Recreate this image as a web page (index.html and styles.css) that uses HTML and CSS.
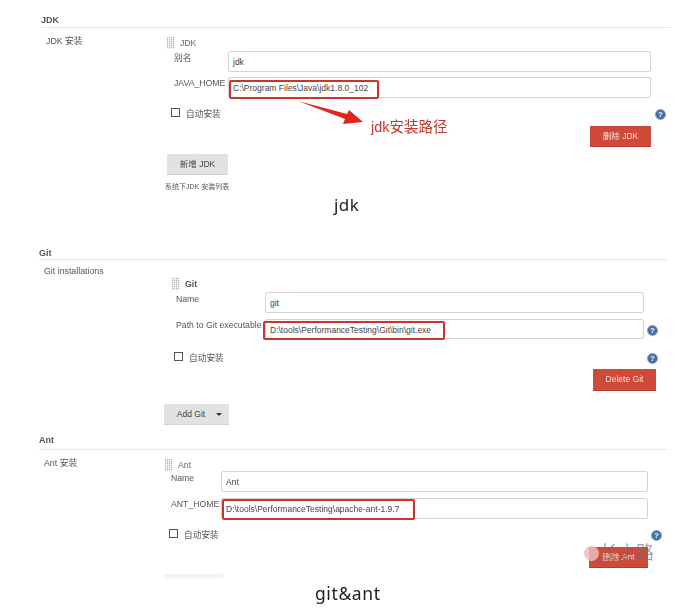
FILE: index.html
```html
<!DOCTYPE html>
<html lang="zh">
<head>
<meta charset="utf-8">
<title>Global Tool Configuration</title>
<link rel="stylesheet" href="styles.css">
</head>
<body>
<main class="page">
  <section class="sec sec-jdk">
    <h2 class="sec-title">JDK</h2>
    <div class="sec-label">JDK 安装</div>
    <div class="inst">
      <div class="inst-head"><span class="handle"></span><span class="inst-name">JDK</span></div>
      <div class="row row-first"><span class="row-label">别名</span><div class="field">jdk</div></div>
      <div class="row row-second">
        <span class="row-label">JAVA_HOME</span>
        <div class="field field-marked">C:\Program Files\Java\jdk1.8.0_102<span class="mark"></span>
          <svg class="arrow" width="80" height="34" viewBox="0 0 80 34"><polygon points="1,1 50,14 52,10 66,22 46,24 48,19" fill="#e0261c"/></svg>
          <span class="note">jdk安装路径</span>
        </div>
      </div>
      <div class="check"><span class="box"></span><span>自动安装</span></div>
      <div class="help-line"><span class="help">?</span></div>
      <div class="del-line"><span class="btn-del">删除 JDK</span></div>
      <div class="add-line"><span class="btn-add">新增 JDK</span></div>
      <div class="small">系统下JDK 安装列表</div>
    </div>
    <p class="caption">jdk</p>
  </section>

  <section class="sec sec-git">
    <h2 class="sec-title">Git</h2>
    <div class="sec-label">Git installations</div>
    <div class="inst">
      <div class="inst-head"><span class="handle"></span><span class="inst-name inst-bold">Git</span></div>
      <div class="row row-first"><span class="row-label">Name</span><div class="field">git</div></div>
      <div class="row row-second">
        <span class="row-label">Path to Git executable</span>
        <div class="field field-marked">D:\tools\PerformanceTesting\Git\bin\git.exe<span class="mark"></span><span class="help help-side">?</span></div>
      </div>
      <div class="check"><span class="box"></span><span>自动安装</span></div>
      <div class="help-line"><span class="help">?</span></div>
      <div class="del-line"><span class="btn-del">Delete Git</span></div>
      <div class="add-line"><span class="btn-add">Add Git<span class="caret"></span></span></div>
    </div>
  </section>

  <section class="sec sec-ant">
    <h2 class="sec-title">Ant</h2>
    <div class="sec-label">Ant 安装</div>
    <div class="inst">
      <div class="inst-head"><span class="handle"></span><span class="inst-name">Ant</span></div>
      <div class="row row-first"><span class="row-label">Name</span><div class="field">Ant</div></div>
      <div class="row row-second">
        <span class="row-label">ANT_HOME</span>
        <div class="field field-marked">D:\tools\PerformanceTesting\apache-ant-1.9.7<span class="mark"></span></div>
      </div>
      <div class="check"><span class="box"></span><span>自动安装</span></div>
      <div class="help-line"><span class="help">?</span></div>
      <div class="del-line">
        <span class="btn-del">删除 Ant
          <span class="watermark"><span class="wm-dot"></span><span class="wm-text">长之路</span></span>
        </span>
      </div>
      <div class="add-line"><span class="btn-add btn-cut"></span></div>
    </div>
    <p class="caption">git&amp;ant</p>
  </section>
</main>
</body>
</html>
```

FILE: styles.css
```css
* { box-sizing: border-box; }

html, body { margin: 0; background: #fff; }

.page {
  width: 688px;
  height: 610px;
  overflow: hidden;
  font-family: "Liberation Sans", "Noto Sans CJK SC", sans-serif;
  font-size: 8.7px;
  color: #555;
  filter: blur(0.4px);
}

.sec {
  margin-left: var(--sec-x);
  position: relative;
}

.sec-jdk {
  --sec-x: 41px; --sec-w: 630px;
  --inst-x: 126px; --handle-x: 0px; --label-x: 7px; --check-x: 4px;
  --input-x: 61px; --input-w: 423px; --del-right: 0px; --help-right: -15px;
  --mark-w: 150px;
  height: 215px;
  padding-top: 14px;
}

.sec-git {
  --sec-x: 39px; --sec-w: 629px;
  --inst-x: 125px; --handle-x: 8px; --label-x: 12px; --check-x: 10px;
  --input-x: 101px; --input-w: 379px; --del-right: -12px; --help-right: -14px;
  --mark-w: 182px;
  margin-top: 32px;
  height: 187px;
}

.sec-ant {
  --sec-x: 39px; --sec-w: 629px;
  --inst-x: 124px; --handle-x: 2px; --label-x: 8px; --check-x: 6px;
  --input-x: 58px; --input-w: 427px; --del-right: 0px; --help-right: -14px;
  --mark-w: 193px;
  height: 176px;
}

.sec-title {
  width: var(--sec-w);
  height: 14px;
  margin: 0;
  border-bottom: 1px solid #eaeaea;
  font-size: 9px;
  line-height: 12px;
  font-weight: 700;
  color: #555;
}

.sec-git .sec-title { height: 13px; }
.sec-ant .sec-title { height: 16px; }

.sec-label {
  height: 0;
  margin: 7px 0 0 5px;
  line-height: 12px;
  font-size: 8.8px;
}

.sec-git .sec-label { margin-top: 5px; }

.inst { margin-left: var(--inst-x); }

.inst-head {
  display: flex;
  align-items: center;
  gap: 5px;
  height: 12px;
  margin: 2px 0 0 var(--handle-x);
}

.sec-git .inst-head { margin-top: 13px; }

.handle {
  width: 8px;
  height: 12px;
  background-color: #eee;
  background-image:
    repeating-linear-gradient(0deg, rgba(255,255,255,.6) 0 1px, transparent 1px 2px),
    repeating-linear-gradient(90deg, #b5b5b5 0 1px, transparent 1px 2px);
}

.inst-name { color: #666; }
.inst-bold { font-weight: 700; color: #555; }

.row {
  display: flex;
  padding-left: var(--label-x);
}

.row-first { margin-top: 2px; height: 21px; }
.row-second { margin-top: 5px; height: 21px; }
.sec-git .row-second { margin-top: 6px; height: 20px; }
.sec-ant .row-first { margin-top: 0; }
.sec-ant .row-second { margin-top: 6px; }

.row-label {
  flex: none;
  width: calc(var(--input-x) - var(--label-x));
  padding-top: 1px;
  line-height: 12px;
  white-space: nowrap;
}

.row-second .row-label { padding-top: 0; }

.field {
  position: relative;
  flex: none;
  width: var(--input-w);
  height: 100%;
  padding: 1px 0 0 4px;
  border: 1px solid #d4d4d4;
  border-radius: 2px;
  background: #fff;
  font-size: 8.5px;
  line-height: 19px;
  color: #444;
  white-space: nowrap;
}

.mark {
  position: absolute;
  left: 0;
  top: 2px;
  width: var(--mark-w);
  height: 19px;
  border: 2px solid #c8352c;
  border-radius: 2px;
}

.sec-git .mark { left: -3px; top: 1px; }
.sec-ant .mark { left: 0; top: 0; height: 21px; }

.arrow {
  position: absolute;
  left: 68px;
  top: 22px;
}

.note {
  position: absolute;
  left: 142px;
  top: 39px;
  font-size: 14.5px;
  line-height: 20px;
  color: #c0392b;
}

.check {
  display: flex;
  align-items: center;
  gap: 6px;
  height: 10px;
  margin: 10px 0 0 var(--check-x);
}

.sec-git .check { margin-top: 13px; }

.box {
  width: 9px;
  height: 9px;
  margin-bottom: 2px;
  border: 1px solid #555;
  background: #fff;
}

.help-line {
  display: flex;
  justify-content: flex-end;
  height: 0;
  width: calc(var(--input-x) + var(--input-w));
  position: relative;
}

.help {
  position: absolute;
  right: var(--help-right);
  top: -9px;
  width: 11px;
  height: 11px;
  border-radius: 50%;
  border: 1px solid #8aa6c4;
  background: #3f6fa3;
  color: #fff;
  font-size: 8px;
  font-weight: 700;
  line-height: 9px;
  text-align: center;
}

.help-side {
  right: -15px;
  top: 5px;
  padding: 0;
}

.del-line {
  display: flex;
  justify-content: flex-end;
  width: calc(var(--input-x) + var(--input-w) - var(--del-right));
  margin-top: 8px;
}

.sec-git .del-line { margin-top: 7px; }

.btn-del {
  position: relative;
  display: block;
  width: 61px;
  height: 21px;
  background: #d04a3a;
  border-bottom: 1px solid #b53a2d;
  color: #f6dedb;
  font-size: 8.5px;
  line-height: 20px;
  text-align: center;
}

.sec-git .btn-del { width: 63px; height: 22px; }
.sec-ant .btn-del { width: 59px; }

.add-line { margin-top: 7px; }
.sec-git .add-line { margin-top: 13px; }
.sec-ant .add-line { margin-top: 6px; }

.btn-add {
  display: block;
  width: 61px;
  height: 21px;
  background: #e2e2e2;
  border-bottom: 1px solid #d2d2d2;
  color: #444;
  font-size: 8.5px;
  line-height: 20px;
  text-align: center;
}

.sec-git .btn-add {
  position: relative;
  width: 65px;
  padding-right: 11px;
}

.sec-ant .btn-add {
  width: 60px;
  height: 5px;
  border: 0;
  background: linear-gradient(#f1f1f1, #fafafa);
}

.caret {
  position: absolute;
  right: 7px;
  top: 9px;
  border: 3px solid transparent;
  border-top: 3px solid #333;
  border-bottom: 0;
}

.small {
  margin: 7px 0 0 -2px;
  font-size: 7px;
  line-height: 10px;
  white-space: nowrap;
  color: #555;
}

.caption {
  position: absolute;
  margin: 0;
  font-size: 17px;
  line-height: 22px;
  font-family: "Noto Sans", sans-serif;
  letter-spacing: .4px;
  color: #222;
}

.sec-jdk .caption { left: 293px; top: 194px; }
.sec-ant .caption { left: 276px; top: 148px; font-size: 17.5px; letter-spacing: .6px; }

.watermark {
  position: absolute;
  left: -5px;
  top: -3px;
  display: flex;
  align-items: center;
}

.wm-dot {
  width: 15px;
  height: 15px;
  border-radius: 50%;
  background: rgba(235, 190, 185, .85);
}

.wm-text {
  margin-left: 1px;
  font-size: 18px;
  line-height: 18px;
  color: rgba(110, 110, 110, .65);
  white-space: nowrap;
}
```
